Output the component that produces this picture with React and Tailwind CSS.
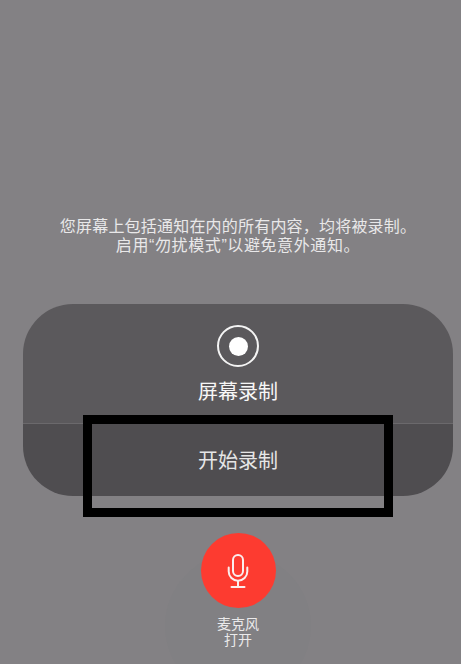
import React from 'react';

const cjk = { fontFamily: '"Noto Sans CJK SC", "Noto Sans", sans-serif' };
const mixed = { fontFamily: '"Liberation Sans", "Noto Sans CJK SC", sans-serif' };

const MicIcon = () => (
  <svg width="32" height="38" viewBox="0 0 32 38" fill="none" stroke="#fbeeee" strokeWidth="2" strokeLinecap="round">
    <rect x="11" y="3" width="10" height="21" rx="5" />
    <path d="M6.7 15.5v4a9.3 9.3 0 0 0 18.6 0v-4" />
    <path d="M16 29v6" />
    <path d="M9.5 35h13" />
  </svg>
);

const App = () => {
  return (
    <div className="relative w-[461px] h-[664px] overflow-hidden bg-[#838184] flex flex-col items-center pt-[217px] pl-[15px]" style={cjk}>
      <div className="text-center text-[16px] leading-[19px] tracking-[0.2px] text-[#e9e8e9] whitespace-nowrap" style={mixed}>
        <p>您屏幕上包括通知在内的所有内容，均将被录制。</p>
        <p className="tracking-[0.6px]">启用“勿扰模式”以避免意外通知。</p>
      </div>

      <div className="relative self-start ml-[8px] mt-[49px] w-[430px] h-[192px] rounded-[50px] overflow-hidden flex flex-col">
        <div className="h-[119px] bg-[#5b595c] flex flex-col items-center pt-[21px]">
          <div className="w-[42px] h-[42px] rounded-full border-2 border-[#f4f4f4] flex items-center justify-center">
            <div className="w-[19px] h-[19px] rounded-full bg-white" />
          </div>
          <p className="mt-[10px] text-[20px] leading-[28px] text-[#f7f7f7]">屏幕录制</p>
        </div>
        <div className="flex-1 bg-[#4f4d50] border-t border-[#6b696c] flex items-center justify-center">
          <p className="text-[20px] leading-[28px] text-[#e6e6e6]">开始录制</p>
        </div>
      </div>

      <div className="absolute left-[83px] top-[415px] w-[310px] h-[102px] border-[9px] border-black" />

      <div className="relative mt-[37px] flex flex-col items-center">
        <div className="absolute top-[20px] w-[146px] h-[146px] rounded-full bg-[#818083]" />
        <div className="relative w-[75px] h-[75px] rounded-full bg-[#fd3b30] flex items-center justify-center">
          <MicIcon />
        </div>
        <div className="relative mt-[8px] text-center text-[14px] leading-[16px] text-[#ebeaeb]" style={mixed}>
          <p>麦克风</p>
          <p>打开</p>
        </div>
      </div>
    </div>
  );
};

export default App;
